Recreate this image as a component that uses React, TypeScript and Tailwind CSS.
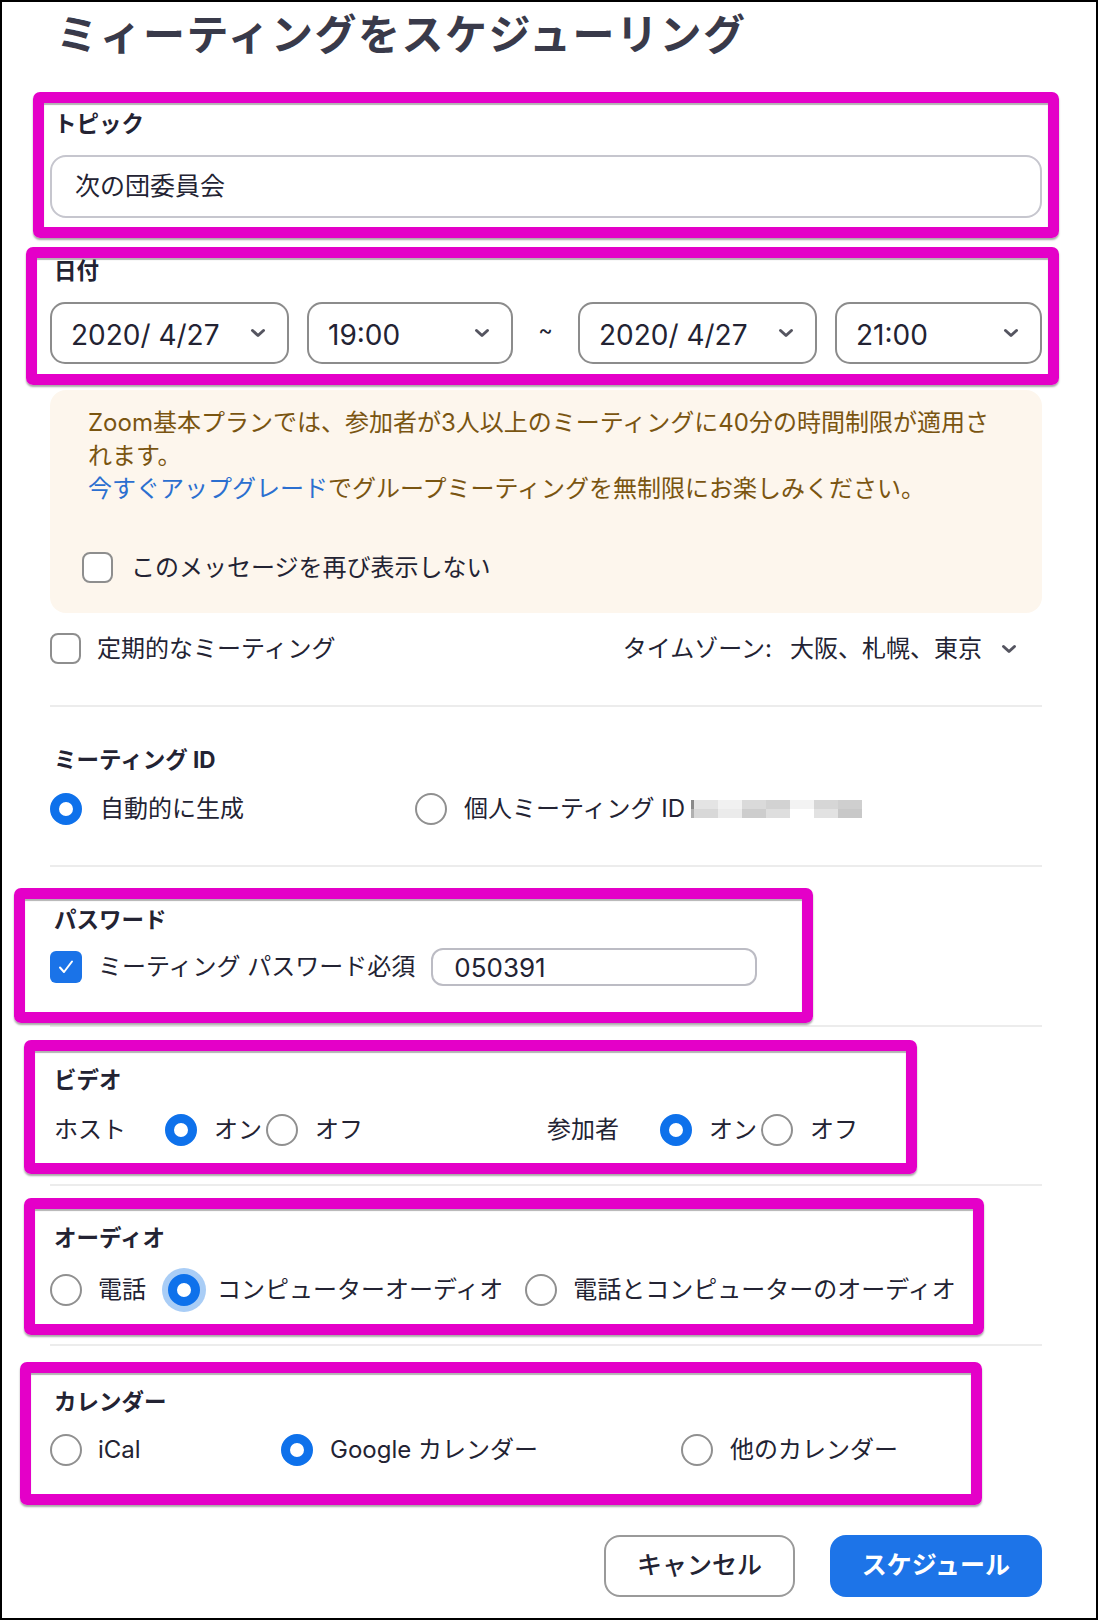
import React from "react";

function Chevron() {
  return (
    <svg width="16" height="10" viewBox="0 0 16 10" className="shrink-0">
      <path d="M2.5 2.5 L8 7.5 L13.5 2.5" fill="none" stroke="#555560" strokeWidth="3" strokeLinecap="round" strokeLinejoin="round" />
    </svg>
  );
}

function Radio({ on, halo }: { on?: boolean; halo?: boolean }) {
  if (on) {
    return (
      <span
        className={
          halo
            ? "block w-[32px] h-[32px] shrink-0 rounded-full border-[9px] border-[#0e71eb] bg-white ring-[6px] ring-[#a9cdf6]"
            : "block w-[32px] h-[32px] shrink-0 rounded-full border-[9px] border-[#0e71eb] bg-white"
        }
      />
    );
  }
  return <span className="block w-[32px] h-[32px] shrink-0 rounded-full border-2 border-[#909090] bg-white" />;
}

function Box() {
  return <span className="block w-[31px] h-[31px] shrink-0 rounded-[8px] border-2 border-[#8e8e8e] bg-white" />;
}

function Select({ value, w }: { value: string; w: string }) {
  return (
    <div className={w + " h-[62px] shrink-0 rounded-[15px] border-2 border-[#8c8c8c] flex items-center justify-between pl-[19px] pr-[21px] text-[28px]"}>
      <span className="whitespace-pre pt-[3px]">{value}</span>
      <Chevron />
    </div>
  );
}

export default function App() {
  return (
    <div className="w-[1098px] h-[1620px] border-2 border-black bg-white overflow-hidden font-['Inter','Noto_Sans_CJK_JP',sans-serif] text-[#232333]">
      <div className="pl-[48px] pr-[54px]">
        <h1 className="pt-[8px] pl-[6px] text-[42px] leading-[50px] font-bold tracking-[1.5px] text-[#393a4a] whitespace-nowrap">
          ミィーティングをスケジューリング
        </h1>

        {/* Topic */}
        <div className="relative mt-[49px]">
          <div className="pointer-events-none absolute -left-[17px] -right-[17px] -top-[17px] -bottom-[20px] rounded-[7px] border-[11px] border-[#e400c8] shadow-[0_2px_2px_rgba(0,0,0,0.35),inset_0_2px_1px_rgba(0,0,0,0.3)]" />
          <div className="pl-[4px] text-[22.5px] leading-[30px] font-bold">トピック</div>
          <div className="mt-[16px] h-[63px] rounded-[16px] border-2 border-[#c6c6ce] flex items-center pl-[23px] text-[25px]">
            次の団委員会
          </div>
        </div>

        {/* Date */}
        <div className="relative mt-[38px]">
          <div className="pointer-events-none absolute -left-[24px] -right-[17px] -top-[9px] -bottom-[21px] rounded-[7px] border-[11px] border-[#e400c8] shadow-[0_2px_2px_rgba(0,0,0,0.35),inset_0_2px_1px_rgba(0,0,0,0.3)]" />
          <div className="pl-[4px] text-[22.5px] leading-[30px] font-bold">日付</div>
          <div className="mt-[16px] flex items-center">
            <Select value="2020/ 4/27" w="w-[239px]" />
            <div className="ml-[18px]">
              <Select value="19:00" w="w-[206px]" />
            </div>
            <div className="w-[65px] shrink-0 text-center text-[22px] leading-none -mt-[6px]">~</div>
            <Select value="2020/ 4/27" w="w-[239px]" />
            <div className="ml-[18px]">
              <Select value="21:00" w="w-[207px]" />
            </div>
          </div>
        </div>

        {/* Warning */}
        <div className="mt-[26px] rounded-[16px] bg-[#fdf6ed] pt-[16px] pl-[38px] pb-[31px] text-[24px] leading-[33px] text-[#7a5511]">
          <div className="whitespace-nowrap">Zoom基本プランでは、参加者が3人以上のミーティングに40分の時間制限が適用さ</div>
          <div className="whitespace-nowrap">れます。</div>
          <div className="whitespace-nowrap">
            <span className="text-[#2b6fd0]">今すぐアップグレード</span>でグループミーティングを無制限にお楽しみください。
          </div>
          <div className="mt-[47px] -ml-[6px] h-[30px] flex items-center text-[#232333]">
            <Box />
            <span className="ml-[18px]">このメッセージを再び表示しない</span>
          </div>
        </div>

        {/* Recurring + timezone */}
        <div className="mt-[20px] h-[31px] flex items-center justify-between text-[24px]">
          <div className="flex items-center">
            <Box />
            <span className="ml-[16px]">定期的なミーティング</span>
          </div>
          <div className="flex items-center pr-[25px]">
            <span>タイムゾーン:</span>
            <span className="ml-[18px]">大阪、札幌、東京</span>
            <span className="ml-[19px]">
              <Chevron />
            </span>
          </div>
        </div>

        <div className="mt-[41px] h-[2px] bg-[#ececec]" />

        {/* Meeting ID */}
        <div className="mt-[38px] pl-[4px] text-[22.5px] leading-[30px] font-bold">ミーティング ID</div>
        <div className="mt-[18px] h-[32px] flex items-center text-[24px]">
          <div className="w-[365px] flex items-center">
            <Radio on />
            <span className="ml-[18px]">自動的に生成</span>
          </div>
          <Radio />
          <span className="ml-[17px] whitespace-nowrap">個人ミーティング ID</span>
          <span className="ml-[6px] flex flex-col">
            <span className="flex">
              <span className="w-[3px] h-[9px] bg-[#8a8a8a]" />
              <span className="w-[24px] h-[9px] bg-[#e4e4e4]" />
              <span className="w-[24px] h-[9px] bg-[#f1f1f1]" />
              <span className="w-[24px] h-[9px] bg-[#dadada]" />
              <span className="w-[24px] h-[9px] bg-[#d2d2d2]" />
              <span className="w-[24px] h-[9px] bg-[#f3f3f3]" />
              <span className="w-[24px] h-[9px] bg-[#d6d6d6]" />
              <span className="w-[24px] h-[9px] bg-[#cfcfcf]" />
            </span>
            <span className="flex">
              <span className="w-[3px] h-[9px] bg-[#b0b0b0]" />
              <span className="w-[24px] h-[9px] bg-[#d8d8d8]" />
              <span className="w-[24px] h-[9px] bg-[#ebebeb]" />
              <span className="w-[24px] h-[9px] bg-[#cdcdcd]" />
              <span className="w-[24px] h-[9px] bg-[#dedede]" />
              <span className="w-[24px] h-[9px] bg-[#ffffff]" />
              <span className="w-[24px] h-[9px] bg-[#e2e2e2]" />
              <span className="w-[24px] h-[9px] bg-[#c8c8c8]" />
            </span>
          </span>
        </div>

        <div className="mt-[40px] h-[2px] bg-[#ececec]" />

        {/* Password */}
        <div className="relative mt-[38px]">
          <div className="pointer-events-none absolute -left-[36px] right-[229px] -top-[17px] -bottom-[34px] rounded-[7px] border-[11px] border-[#e400c8] shadow-[0_2px_2px_rgba(0,0,0,0.35),inset_0_2px_1px_rgba(0,0,0,0.3)]" />
          <div className="pl-[4px] text-[22.5px] leading-[30px] font-bold">パスワード</div>
          <div className="mt-[10px] h-[44px] flex items-center text-[24px]">
            <span className="flex w-[32px] h-[32px] shrink-0 items-center justify-center rounded-[6px] bg-[#1a73e8]">
              <svg width="20" height="20" viewBox="0 0 20 20">
                <path d="M4 10.5 L8 15 L16 4.5" fill="none" stroke="white" strokeWidth="2" strokeLinecap="round" strokeLinejoin="round" />
              </svg>
            </span>
            <span className="ml-[16px] whitespace-nowrap">ミーティング パスワード必須</span>
            <div className="ml-[16px] w-[326px] h-[38px] rounded-[12px] border-2 border-[#bcbcc4] flex items-center pl-[21px] text-[26px]">
              050391
            </div>
          </div>
        </div>

        <div className="mt-[36px] h-[2px] bg-[#ececec]" />

        {/* Video */}
        <div className="relative mt-[38px]">
          <div className="pointer-events-none absolute -left-[26px] right-[125px] -top-[25px] -bottom-[28px] rounded-[7px] border-[11px] border-[#e400c8] shadow-[0_2px_2px_rgba(0,0,0,0.35),inset_0_2px_1px_rgba(0,0,0,0.3)]" />
          <div className="pl-[4px] text-[22.5px] leading-[30px] font-bold">ビデオ</div>
          <div className="mt-[19px] h-[32px] flex items-center text-[24px]">
            <div className="w-[497px] flex items-center">
              <span className="w-[115px] pl-[4px]">ホスト</span>
              <Radio on />
              <span className="ml-[17px]">オン</span>
              <span className="ml-[4px]">
                <Radio />
              </span>
              <span className="ml-[17px]">オフ</span>
            </div>
            <span className="w-[113px]">参加者</span>
            <Radio on />
            <span className="ml-[17px]">オン</span>
            <span className="ml-[4px]">
              <Radio />
            </span>
            <span className="ml-[17px]">オフ</span>
          </div>
        </div>

        <div className="mt-[38px] h-[2px] bg-[#ececec]" />

        {/* Audio */}
        <div className="relative mt-[37px]">
          <div className="pointer-events-none absolute -left-[26px] right-[58px] -top-[25px] -bottom-[29px] rounded-[7px] border-[11px] border-[#e400c8] shadow-[0_2px_2px_rgba(0,0,0,0.35),inset_0_2px_1px_rgba(0,0,0,0.3)]" />
          <div className="pl-[4px] text-[22.5px] leading-[30px] font-bold">オーディオ</div>
          <div className="mt-[21px] h-[32px] flex items-center text-[24px] whitespace-nowrap">
            <Radio />
            <span className="ml-[16px]">電話</span>
            <span className="ml-[22px]">
              <Radio on halo />
            </span>
            <span className="ml-[17px]">コンピューターオーディオ</span>
            <span className="ml-[22px]">
              <Radio />
            </span>
            <span className="ml-[16px]">電話とコンピューターのオーディオ</span>
          </div>
        </div>

        <div className="mt-[38px] h-[2px] bg-[#ececec]" />

        {/* Calendar */}
        <div className="relative mt-[41px]">
          <div className="pointer-events-none absolute -left-[30px] right-[60px] -top-[25px] -bottom-[39px] rounded-[7px] border-[11px] border-[#e400c8] shadow-[0_2px_2px_rgba(0,0,0,0.35),inset_0_2px_1px_rgba(0,0,0,0.3)]" />
          <div className="pl-[4px] text-[22.5px] leading-[30px] font-bold">カレンダー</div>
          <div className="mt-[17px] h-[32px] flex items-center text-[24px] whitespace-nowrap">
            <div className="w-[231px] flex items-center">
              <Radio />
              <span className="ml-[16px]">iCal</span>
            </div>
            <div className="w-[400px] flex items-center">
              <Radio on />
              <span className="ml-[17px]">Google カレンダー</span>
            </div>
            <Radio />
            <span className="ml-[17px]">他のカレンダー</span>
          </div>
        </div>

        {/* Buttons */}
        <div className="mt-[69px] flex justify-end gap-[35px]">
          <button className="w-[191px] h-[62px] rounded-[16px] border-2 border-[#9a9a9a] bg-white text-[25px] font-medium text-[#232333]">
            キャンセル
          </button>
          <button className="w-[212px] h-[62px] rounded-[16px] bg-[#1d74e8] text-[25px] font-bold text-white">
            スケジュール
          </button>
        </div>
      </div>
    </div>
  );
}
